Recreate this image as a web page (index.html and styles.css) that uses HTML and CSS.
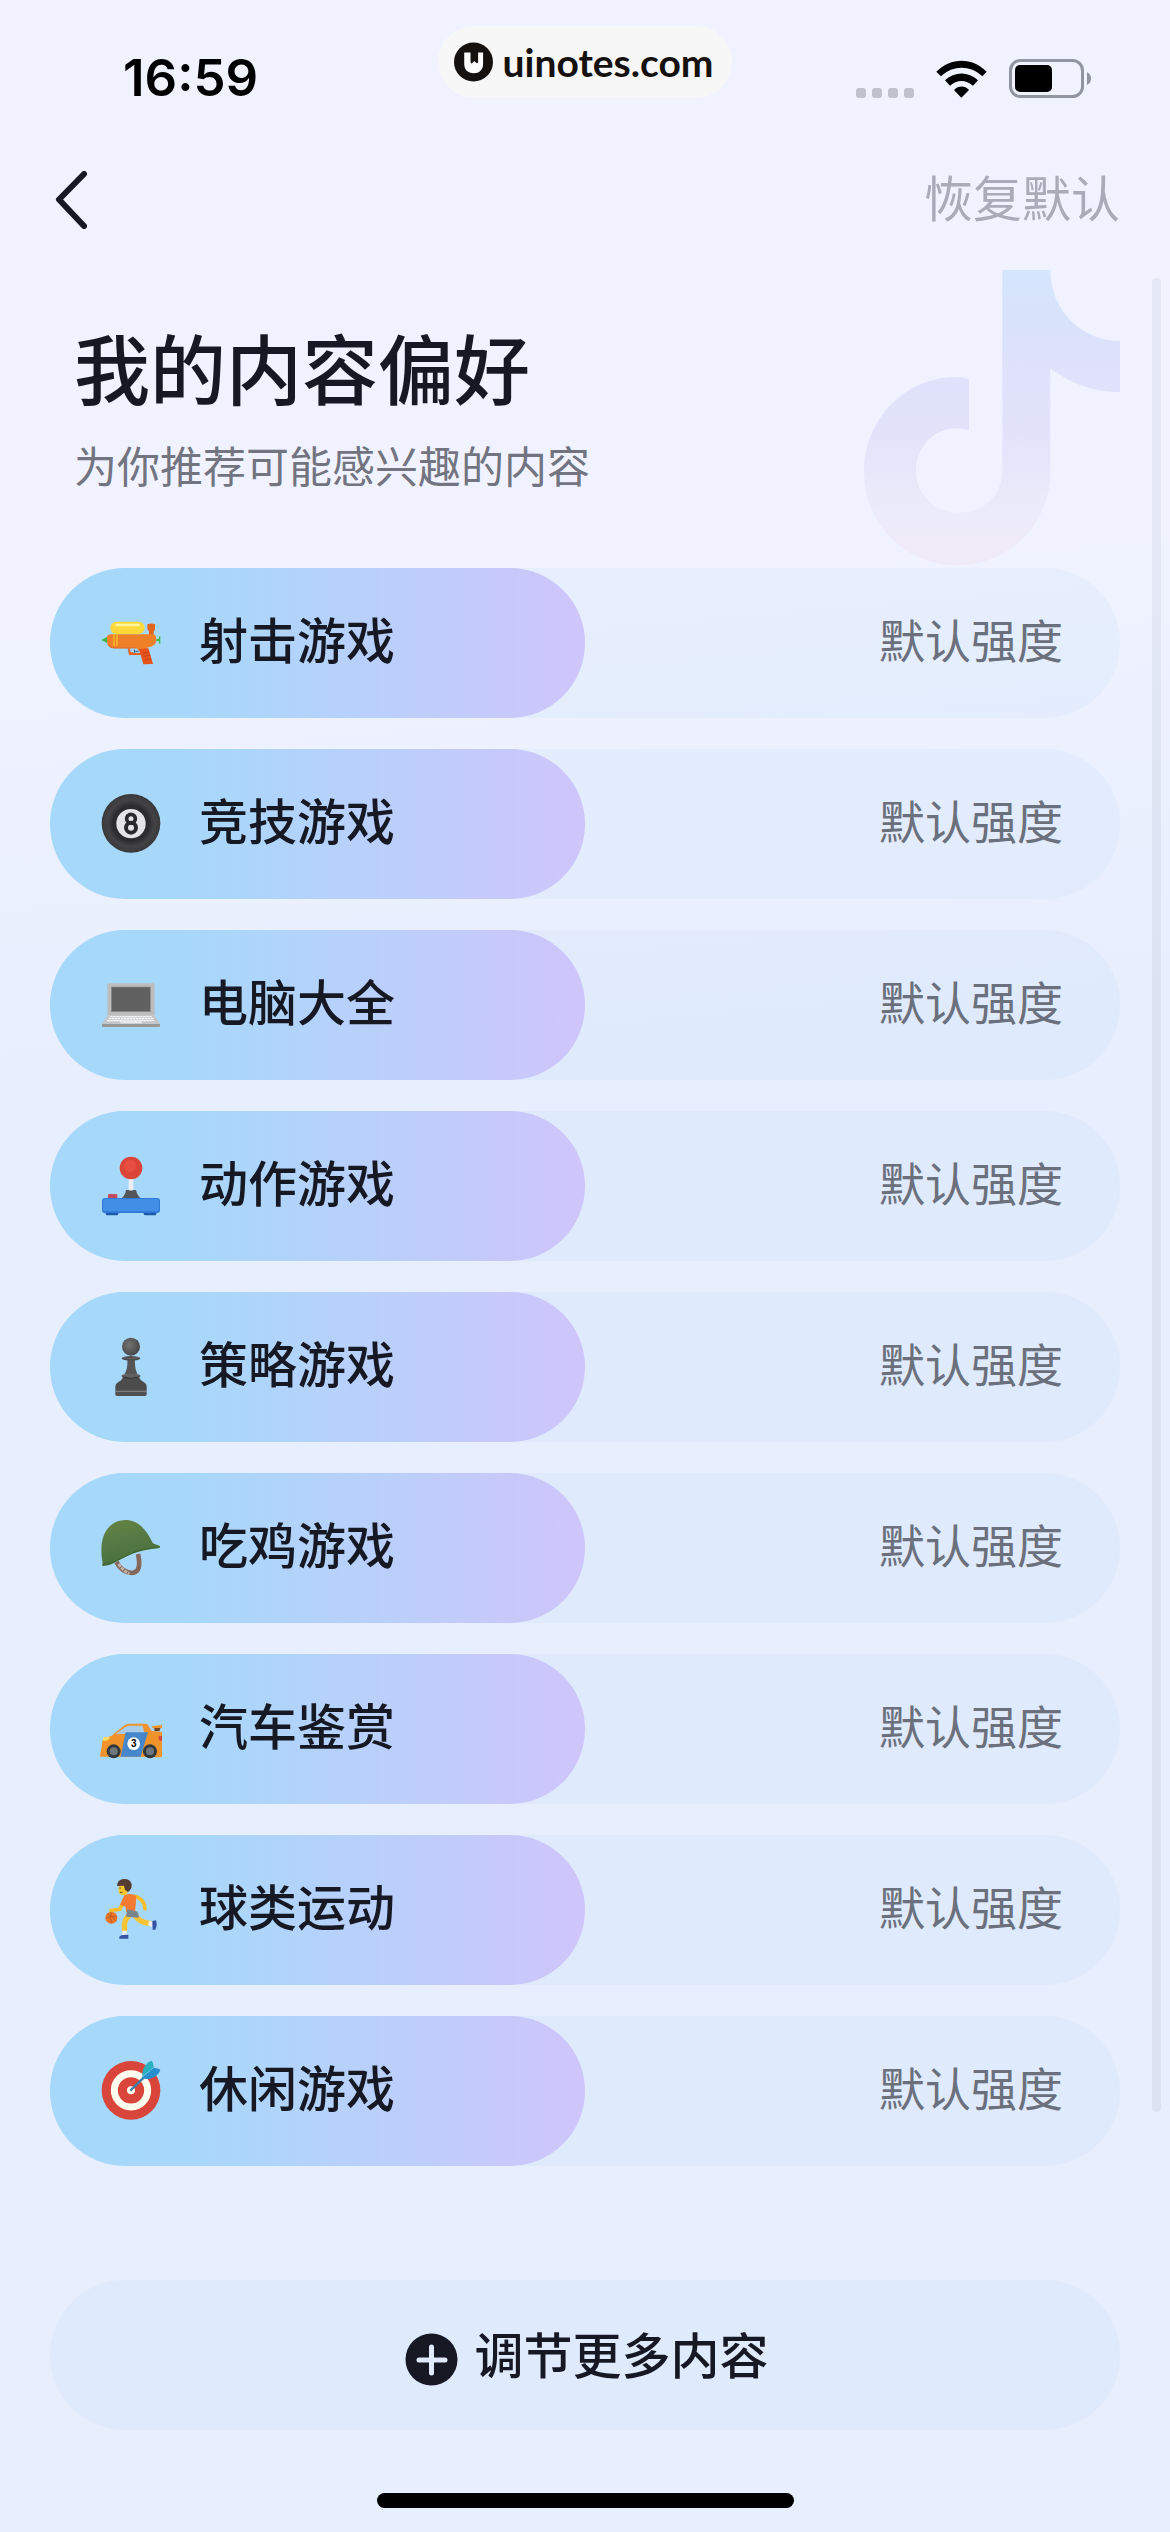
FILE: index.html
```html
<!DOCTYPE html>
<html lang="zh-CN">
<head>
<meta charset="utf-8">
<meta name="viewport" content="width=device-width, initial-scale=1">
<title>我的内容偏好</title>
<link rel="stylesheet" href="styles.css">
</head>
<body>
<div class="screen">
  <header class="status">
    <time class="clock">16:59</time>
    <div class="island">
      <svg class="island-logo" viewBox="76 96 118 120" aria-hidden="true">
        <circle cx="135" cy="156" r="59" fill="#15110f"/>
        <path d="M107 127h19v27q0 10 6 4l5-5 7 6q5 3 5-5V127h15v35c0 18-12 28-28 28-18 0-29-11-29-28z" fill="#fff"/>
      </svg>
      <span>uinotes.com</span>
    </div>
    <div class="signals">
      <svg class="dots" viewBox="0 0 58 10" aria-hidden="true" fill="#bfc2cd">
        <rect width="10" height="10" rx="3"/><rect x="16" width="10" height="10" rx="3"/><rect x="32" width="10" height="10" rx="3"/><rect x="48" width="10" height="10" rx="3"/>
      </svg>
      <svg class="wifi" viewBox="288 55 153 114" aria-hidden="true">
        <path d="M289 90C332 46 398 46 440 90L427 104C390 70 340 70 303 104zM315 116C344 89 385 89 414 116L399 132C378 113 350 113 330 132zM342 145C355 131 375 131 387 145L364 168z"/>
      </svg>
      <svg class="battery" viewBox="0 0 82 39" aria-hidden="true">
        <rect x="1.5" y="1.5" width="72" height="36" rx="10" fill="none" stroke="#9195a0" stroke-width="3"/>
        <rect x="6" y="6" width="37" height="27" rx="5"/>
        <path d="M78 13q4 2 4 6.500t-4 6.500z" fill="#9195a0"/>
      </svg>
    </div>
  </header>

  <nav class="nav">
    <button class="back" type="button" aria-label="返回">
      <svg viewBox="0 0 32 58" aria-hidden="true"><path d="M29 3L4 28.500 29 55" fill="none" stroke="#161823" stroke-width="6" stroke-linecap="round" stroke-linejoin="round"/></svg>
    </button>
    <button class="reset" type="button">恢复默认</button>
  </nav>

  <main>
    <section class="hero">
      <div class="hero-text">
        <h1>我的内容偏好</h1>
        <p>为你推荐可能感兴趣的内容</p>
      </div>
      <svg class="note" viewBox="72 60 768 888" aria-hidden="true">
        <defs><linearGradient id="note" x1="0" y1="0" x2="0" y2="1"><stop offset="0" stop-color="#d5e5fd"/><stop offset=".15" stop-color="#d7e3fb"/><stop offset=".35" stop-color="#e0e1fa"/><stop offset=".55" stop-color="#e2e3fb"/><stop offset=".82" stop-color="#ecebf9"/><stop offset="1" stop-color="#f0eaf8"/></linearGradient></defs>
        <path fill="url(#note)" d="M487 60H631C631 180 725 273 840 273V427C760 427 690 400 631 355V665C631 822 508 946 352 946 195 946 72 822 72 665 72 508 195 382 344 382q22 0 43 4V542q-18-7-35-7C280 535 228 592 228 662c0 73 57 126 130 126 72 0 129-53 129-126z"/>
      </svg>
    </section>

    <ul class="prefs">
      <li class="pref">
        <span class="fill" style="width:50%"></span>
        <svg class="emoji" viewBox="63 70 180 180" aria-hidden="true">
          <path d="M64 151l17-9v18z" fill="#43b649"/><path d="M228 149l8-1 2-8h3v22h-3l-2-8-8-1z" fill="#43b649"/>
          <path d="M143 176l4 20h38l-3-8h-30l-3-12z" fill="#e8611e"/><path d="M156 178h22l4 12h-22z" fill="#a9d5f0"/><path d="M163 180l1 10M166 185h10" stroke="#2d5f92" stroke-width="3"/>
          <path d="M202 104q12-5 23 0v13q-1 8-4 8v14h-14v-15q-5-2-5-8z" fill="#e4661c"/>
          <path d="M81 140q3-6 12-6H220q9 2 9 16 0 14-14 20-6 3-14 4l6 8-26 6-11-13H100q-19 0-19-20z" fill="#f08028"/>
          <rect x="91" y="96" width="103" height="37" rx="18" fill="#fbd93a"/><rect x="106" y="102" width="74" height="8" rx="4" fill="#fff59b"/>
          <path d="M177 178l28-2 14 47-29 1z" fill="#e8531d"/><path d="M188 190l20-3m-17 13 20-3m-17 14 20-3" stroke="#c9420f" stroke-width="3"/>
          <path d="M84 163q4 11 16 12h70" fill="none" stroke="#d8661e" stroke-width="3"/><path d="M102 133v36m9-36v36" stroke="#fbc02d" stroke-width="4"/>
        </svg>
        <label class="name" for="p1">射击游戏</label><span class="level">默认强度</span>
        <input class="range" id="p1" type="range" value="50">
      </li>
      <li class="pref">
        <span class="fill" style="width:50%"></span>
        <svg class="emoji" viewBox="63 73 180 180" aria-hidden="true">
          <defs><radialGradient id="ball" cx=".5" cy=".5" r=".55"><stop offset=".55" stop-color="#2c2c2e"/><stop offset=".72" stop-color="#434345"/><stop offset="1" stop-color="#343436"/></radialGradient></defs>
          <circle cx="153" cy="161" r="88" fill="url(#ball)"/><circle cx="153" cy="162" r="44" fill="#e4e4e6"/>
          <circle cx="153" cy="147" r="13" fill="none" stroke="#2a2a2c" stroke-width="11"/><circle cx="153" cy="174" r="15" fill="none" stroke="#2a2a2c" stroke-width="12"/>
        </svg>
        <label class="name" for="p2">竞技游戏</label><span class="level">默认强度</span>
        <input class="range" id="p2" type="range" value="50">
      </li>
      <li class="pref">
        <span class="fill" style="width:50%"></span>
        <svg class="emoji" viewBox="63 615 180 180" aria-hidden="true">
          <rect x="82" y="640" width="142" height="100" rx="6" fill="#bdbdbd"/><rect x="94" y="651" width="117" height="74" fill="#616161" stroke="#8a8a8a" stroke-width="2"/>
          <path d="M84 735h138l18 27v6q0 3-4 3H70q-4 0-4-3v-6z" fill="#c4c6c8"/><path d="M66 762h174v6q0 3-4 3H70q-4 0-4-3z" fill="#989898"/>
          <path d="M91 740h126M86 746h136M82 752h140" stroke="#fff" stroke-width="4" stroke-dasharray="7 2"/><path d="M124 749h58l4 11h-66z" fill="#e9e9e9"/>
        </svg>
        <label class="name" for="p3">电脑大全</label><span class="level">默认强度</span>
        <input class="range" id="p3" type="range" value="50">
      </li>
      <li class="pref">
        <span class="fill" style="width:50%"></span>
        <svg class="emoji" viewBox="63 78 180 180" aria-hidden="true">
          <path d="M77 246h38v5q0 5-5 5H83q-6 0-6-5zM191 246h38v5q0 5-5 5h-27q-6 0-6-5z" fill="#1e56a8"/>
          <rect x="84" y="192" width="28" height="16" rx="4" fill="#c34b5b"/><path d="M122 208q14-12 16-28h30q3 16 17 28z" fill="#545659"/>
          <path d="M146 144h14v36q-7 3-14 0z" fill="#eceff1"/><circle cx="153" cy="114" r="34" fill="#dc4437"/><circle cx="150" cy="108" r="18" fill="#ee5548" opacity=".6"/>
          <rect x="66" y="204" width="174" height="45" rx="9" fill="#2f78d6"/><rect x="69" y="207" width="168" height="37" rx="7" fill="#438ee6"/>
        </svg>
        <label class="name" for="p4">动作游戏</label><span class="level">默认强度</span>
        <input class="range" id="p4" type="range" value="50">
      </li>
      <li class="pref">
        <span class="fill" style="width:50%"></span>
        <svg class="emoji" viewBox="63 621 180 180" aria-hidden="true">
          <defs><radialGradient id="pawn" cx=".4" cy=".4" r=".6"><stop offset="0" stop-color="#747474"/><stop offset="1" stop-color="#484848"/></radialGradient></defs>
          <path d="M142 685h23c-1 24 2 37 8 48h-40c8-12 10-24 9-48z" fill="#555"/><circle cx="153" cy="650" r="27" fill="url(#pawn)"/>
          <ellipse cx="153" cy="685" rx="28" ry="7" fill="#4c4c4c"/><path d="M128 682q25 9 50 0" fill="none" stroke="#707070" stroke-width="2"/>
          <path d="M128 742h50c2 13 23 14 22 28v12h-94v-12c0-14 20-15 22-28z" fill="#4c4c4c"/><ellipse cx="153" cy="738" rx="29" ry="7" fill="#606060"/>
          <path d="M129 741q24 8 48 0" fill="none" stroke="#333" stroke-width="3"/><rect x="106" y="780" width="94" height="18" rx="5" fill="#505050"/><path d="M107 784h92" stroke="#888" stroke-width="3"/>
        </svg>
        <label class="name" for="p5">策略游戏</label><span class="level">默认强度</span>
        <input class="range" id="p5" type="range" value="50">
      </li>
      <li class="pref">
        <span class="fill" style="width:50%"></span>
        <svg class="emoji" viewBox="63 84 180 180" aria-hidden="true">
          <defs><linearGradient id="helmet" x1="0" y1="0" x2=".3" y2="1"><stop offset="0" stop-color="#66823f"/><stop offset=".45" stop-color="#587b46"/><stop offset="1" stop-color="#47703a"/></linearGradient></defs>
          <path d="M109 216c12 21 28 32 46 33 24-1 26-25 19-57" fill="none" stroke="#85675b" stroke-width="14"/><path d="M116 222c9 13 18 23 32 29" fill="none" stroke="#c5b2a6" stroke-width="9" stroke-dasharray="10 3"/>
          <path d="M68 219C53 140 83 91 137 90c42 0 66 37 82 70l19 7q5 3 0 7c-42 4-88 16-120 35-15 11-33 18-49 19q-5-2-1-9z" fill="url(#helmet)"/>
          <path d="M70 224c33-5 60-22 92-37 26-11 50-13 74-14" fill="none" stroke="#3b622f" stroke-width="3"/>
        </svg>
        <label class="name" for="p6">吃鸡游戏</label><span class="level">默认强度</span>
        <input class="range" id="p6" type="range" value="50">
      </li>
      <li class="pref">
        <span class="fill" style="width:50%"></span>
        <svg class="emoji" viewBox="63 627 180 180" aria-hidden="true">
          <path d="M222 712h20l-4 12h-14z" fill="#6a3d26"/><path d="M216 709l30-4v9l-28 1z" fill="#ef9329"/>
          <path d="M60 799l8-49q6-8 26-12l29-24q14-13 25-13h48q6 0 10 7l9 15 31 3v74q-12 3-25 0H63q-3 0-3-1z" fill="#f0932b"/>
          <path d="M107 733q22-20 37-26h44l5 21z" fill="#a9ccea"/><path d="M137 727h67l-22 73h-60z" fill="#4687cb"/>
          <path d="M70 742l18-1q5 8-14 12l-6-1z" fill="#ffdc60"/><path d="M236 738h10v14h-7q-4-5-3-14z" fill="#d84545"/>
          <circle cx="101" cy="784" r="21" fill="#34383b"/><circle cx="210" cy="784" r="21" fill="#34383b"/><circle cx="101" cy="784" r="12" fill="#6d777d"/><circle cx="210" cy="784" r="12" fill="#6d777d"/>
          <circle cx="161" cy="761" r="19" fill="#fff"/><text x="161" y="772" text-anchor="middle" class="car-number">3</text>
        </svg>
        <label class="name" for="p7">汽车鉴赏</label><span class="level">默认强度</span>
        <input class="range" id="p7" type="range" value="50">
      </li>
      <li class="pref">
        <span class="fill" style="width:50%"></span>
        <svg class="emoji" viewBox="63 90 180 180" aria-hidden="true">
          <path d="M133 152l-14 26-26 3m72-42c22 8 30 20 30 37" fill="none" stroke="#f6bd2c" stroke-width="11" stroke-linecap="round"/>
          <path d="M148 196c-16 13-16 28-14 47m30-47c14 20 30 22 49 25" fill="none" stroke="#f6c432" stroke-width="16"/>
          <path d="M127 242h13v14h-13zM207 213l12 4-3 14-12-5z" fill="#eee"/><path d="M118 260q6-7 27-5v11h-27zM217 213l11-2q5 13-2 28h-8z" fill="#3654a5"/>
          <path d="M133 136q20-10 36 3l-1 16-3 31h-26l-2-16-17-6z" fill="#f47b31"/><path d="M142 178l28 6q8 8 6 19l-38-3z" fill="#79858b"/>
          <ellipse cx="130" cy="119" rx="15" ry="17" fill="#f8c62e"/><path d="M111 108q1-19 19-21 21-1 25 16 1 15-11 23l-9-6-3-13z" fill="#543c32"/><path d="M118 114h5m-3 13h8" stroke="#6b4b20" stroke-width="3"/>
          <circle cx="94" cy="203" r="18" fill="#ed7628"/><path d="M77 205q18-10 34-5M94 186q-8 18 2 34M81 191q16 8 28 22" fill="none" stroke="#af4e20" stroke-width="2"/>
        </svg>
        <label class="name" for="p8">球类运动</label><span class="level">默认强度</span>
        <input class="range" id="p8" type="range" value="50">
      </li>
      <li class="pref">
        <span class="fill" style="width:50%"></span>
        <svg class="emoji" viewBox="63 633 180 180" aria-hidden="true">
          <circle cx="153" cy="721" r="88" fill="#d9443b"/><circle cx="153" cy="721" r="50" fill="#d9443b" stroke="#fffdf0" stroke-width="21"/><circle cx="153" cy="721" r="12" fill="#fffdf0"/>
          <path d="M151 722l50-49" stroke="#3c7ea8" stroke-width="7"/><path d="M187 680c-2-19 7-41 28-48 9 12 5 25 0 33z" fill="#2bb0bd"/><path d="M187 681l32-27q14-1 22 5c-6 20-30 33-54 26z" fill="#288fce"/><path d="M187 681l37-31" stroke="#67c8e6" stroke-width="3"/>
        </svg>
        <label class="name" for="p9">休闲游戏</label><span class="level">默认强度</span>
        <input class="range" id="p9" type="range" value="50">
      </li>
    </ul>

    <button class="more" type="button">
      <svg viewBox="0 0 53 53" aria-hidden="true"><circle cx="26.500" cy="26.500" r="26" fill="#161823"/><path d="M26.500 14v26M14 27h26" stroke="#e0eafc" stroke-width="5" stroke-linecap="round"/></svg>
      <span>调节更多内容</span>
    </button>
  </main>
  <div class="home"></div>
  <div class="scrollbar"></div>
</div>
</body>
</html>
```
FILE: styles.css
```css
* { box-sizing: border-box; }

body {
  margin: 0;
  color: #161823;
  background: #e7eefe;
  font-family: "Noto Sans CJK SC", sans-serif;
}

button {
  margin: 0;
  padding: 0;
  border: 0;
  background: none;
  color: inherit;
  font-family: inherit;
}

svg { display: block; flex: none; }

.screen {
  position: relative;
  min-height: 100vh;
  padding-bottom: 24px;
  background: linear-gradient(175deg, #f0f3ff 0%, #f0f3ff 24%, #e7eefe 42%, #e7eefe 100%);
}

.status {
  display: grid;
  grid-template-columns: 1fr auto 1fr;
  align-items: center;
  height: 156px;
}

.clock {
  padding-left: 123px;
  color: #000;
  font: 600 51px/60px Inter, sans-serif;
}

.island {
  display: flex;
  align-self: start;
  align-items: center;
  gap: 9px;
  height: 72px;
  margin-top: 26px;
  padding: 0 18px 0 16px;
  border-radius: 36px;
  background: #f7f7f7;
  color: #15110f;
  font: 700 39px/48px Lato, sans-serif;
}

.island-logo { width: 39px; height: 40px; }

.signals {
  display: flex;
  justify-content: flex-end;
  align-items: flex-end;
  gap: 22px;
  padding-right: 79px;
}

.dots { width: 58px; height: 10px; }
.wifi { width: 51px; height: 38px; }
.battery { width: 82px; height: 39px; }

.nav {
  display: flex;
  justify-content: space-between;
  align-items: center;
  height: 88px;
  padding: 0 50px;
}

.back { padding: 0 5px; }
.back svg { width: 32px; height: 58px; }

.reset {
  padding-bottom: 8px;
  color: #a9abb8;
  font-size: 49px;
  line-height: 60px;
}

.hero {
  display: flex;
  justify-content: space-between;
  align-items: flex-start;
  padding: 26px 50px 2px 74px;
}

.hero-text { padding-top: 46px; }

h1 {
  margin: 0 0 18px;
  font-size: 76px;
  font-weight: 500;
  line-height: 100px;
}

.hero p {
  margin: 0;
  color: #72747f;
  font-size: 43px;
  line-height: 60px;
}

.note { width: 256px; height: 296px; }

.prefs {
  display: grid;
  gap: 31px;
  margin: 0;
  padding: 0 50px;
  list-style: none;
}

.pref {
  position: relative;
  display: flex;
  align-items: center;
  height: 150px;
  padding: 0 57px 0 51px;
  border-radius: 75px;
  background: rgba(180, 216, 242, 0.15);
}

.fill {
  position: absolute;
  inset: 0 auto 0 0;
  border-radius: 75px;
  background: linear-gradient(90deg, #a5d8fa 0%, #a7d8fa 25%, #b9d0fb 60%, #cfc5fa 100%);
}

.emoji {
  position: relative;
  width: 60px;
  height: 60px;
  overflow: visible;
}

.car-number { font: 700 30px "Liberation Sans", sans-serif; }

.name,
.level {
  position: relative;
  padding-bottom: 10px;
}

.name {
  margin-left: 38px;
  font-size: 49px;
  font-weight: 500;
  line-height: 60px;
}

.level {
  margin-left: auto;
  color: #6b707d;
  font-size: 46px;
  line-height: 60px;
}

.range {
  position: absolute;
  inset: 0;
  width: 100%;
  height: 100%;
  margin: 0;
  background: transparent;
  appearance: none;
}

.range::-webkit-slider-thumb {
  width: 75px;
  height: 150px;
  background: transparent;
  appearance: none;
}

.more {
  display: flex;
  justify-content: center;
  align-items: center;
  gap: 16px;
  width: calc(100% - 100px);
  height: 150px;
  margin: 114px 50px 0;
  padding-left: 4px;
  border-radius: 75px;
  background: #dfeafc;
  font-size: 49px;
  font-weight: 500;
  line-height: 60px;
}

.more svg { width: 53px; height: 53px; margin-top: 8px; }
.more span { padding-bottom: 5px; }

.home {
  width: 417px;
  height: 15px;
  margin: 63px auto 0;
  border-radius: 8px;
  background: #000;
}

.scrollbar {
  position: absolute;
  top: 278px;
  right: 9px;
  bottom: 420px;
  width: 9px;
  border-radius: 5px;
  background: rgba(90, 100, 110, 0.08);
}
```
